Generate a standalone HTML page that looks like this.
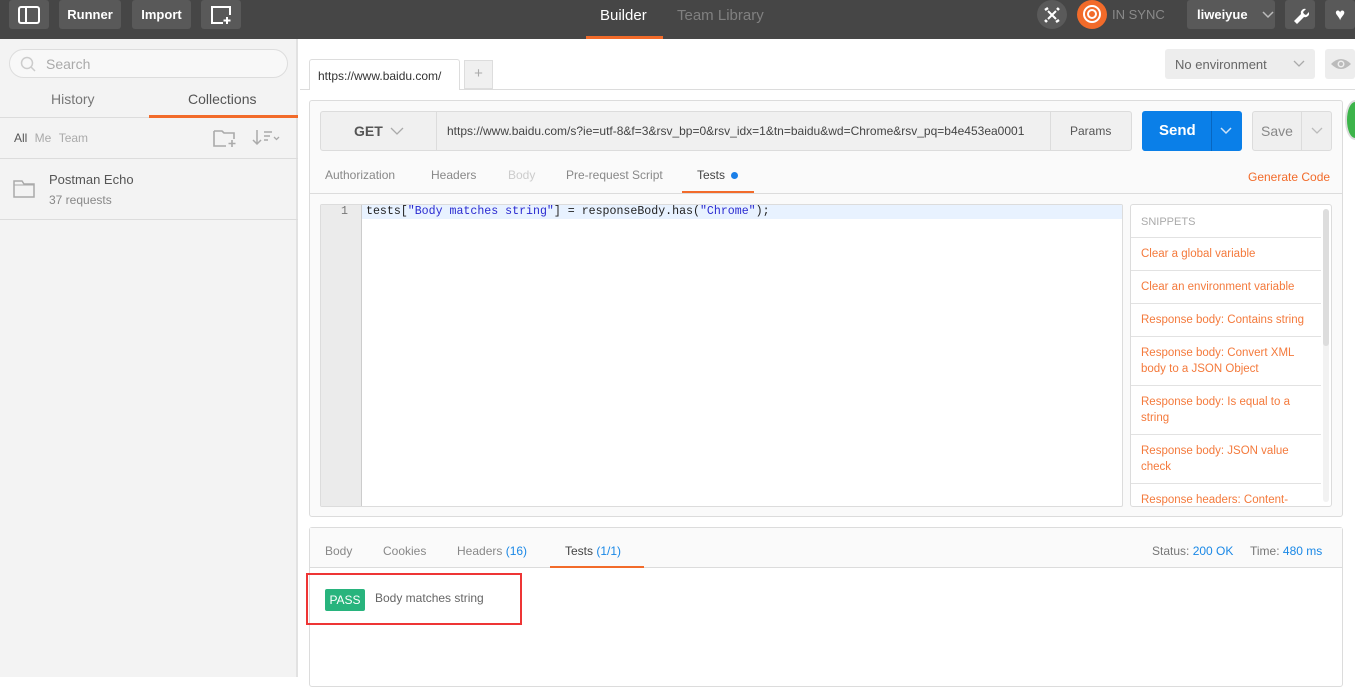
<!DOCTYPE html>
<html><head><meta charset="utf-8"><style>
*{box-sizing:border-box;margin:0;padding:0}
body{width:1355px;height:677px;overflow:hidden;background:#fff;font-family:"Liberation Sans",sans-serif;font-size:13px;color:#505050;position:relative}
.a{position:absolute}
.top{left:0;top:0;width:1355px;height:39px;background:#464646}
.tb{background:#595959;border-radius:3px;color:#fff;font-weight:bold;font-size:13px;display:flex;align-items:center;justify-content:center;top:0;height:29px}
.side{left:0;top:39px;width:298px;height:638px;background:#f3f3f3;border-right:2px solid #e2e2e2}
.hl{height:1px;background:#dcdcdc}
.blue{color:#1a88e6}
.box{border:1px solid #dcdcdc;border-radius:3px}
.snip{left:0;width:190px;padding:0 10px;color:#f47a3c;font-size:11.5px;line-height:16px;border-bottom:1px solid #e2e2e2;display:flex;align-items:center;white-space:nowrap}
.snip.w{white-space:normal}
</style></head><body>
<div class="a top"></div>
<div class="a tb" style="left:9px;width:40px"><svg width="22" height="18"><rect x="1" y="1" width="20" height="16" rx="2" fill="none" stroke="#fff" stroke-width="2"/><line x1="8" y1="1" x2="8" y2="17" stroke="#fff" stroke-width="2"/></svg></div>
<div class="a tb" style="left:59px;width:62px">Runner</div>
<div class="a tb" style="left:132px;width:59px">Import</div>
<div class="a tb" style="left:201px;width:40px"><svg width="24" height="20"><path d="M14 2H3v16h11" fill="none" stroke="#fff" stroke-width="2"/><path d="M3 2h18v8" fill="none" stroke="#fff" stroke-width="2"/><path d="M18 12v7M14.5 15.5h7" stroke="#fff" stroke-width="2"/></svg></div>
<div class="a" style="left:600px;top:7px;color:#fff;font-size:15px">Builder</div>
<div class="a" style="left:586px;top:36px;width:77px;height:3px;background:#f26b2a"></div>
<div class="a" style="left:677px;top:7px;color:#808080;font-size:15px">Team Library</div>
<div class="a" style="left:1037px;top:0;width:30px;height:29px;border-radius:50%;background:#5a5a5a"></div>
<svg class="a" style="left:1042px;top:5px" width="20" height="20"><path d="M6 6l8 8M14 6l-8 8" stroke="#fff" stroke-width="2"/><path d="M3 5l3-2M17 15l-3 2M15 3l2 2M3 15l2 2" stroke="#fff" stroke-width="2.5"/></svg>
<div class="a" style="left:1077px;top:0;width:30px;height:29px;border-radius:50%;background:#f26b2a"></div>
<div class="a" style="left:1083px;top:5px;width:18px;height:18px;border-radius:50%;border:2px solid #fff"></div>
<div class="a" style="left:1087px;top:9px;width:10px;height:10px;border-radius:50%;border:2px solid #fff"></div>
<div class="a" style="left:1112px;top:7px;color:#8a8a8a;font-size:13px">IN SYNC</div>
<div class="a tb" style="left:1187px;width:88px;justify-content:flex-start;padding-left:10px">liweiyue<svg style="margin-left:14px" width="12" height="8"><path d="M1 1l5 5 5-5" fill="none" stroke="#bbb" stroke-width="1.5"/></svg></div>
<div class="a tb" style="left:1285px;width:30px"><svg width="18" height="18"><path d="M3 15l7-7a4 4 0 0 1 5-5l-3 3 1 2 2 1 3-3a4 4 0 0 1-5 5l-7 7z" fill="#fff"/></svg></div>
<div class="a tb" style="left:1325px;width:30px;font-size:17px">&#9829;</div>

<div class="a side"></div>
<div class="a" style="left:9px;top:49px;width:279px;height:29px;border:1px solid #ddd;border-radius:15px;background:#f8f8f8"></div>
<svg class="a" style="left:20px;top:56px" width="16" height="16"><circle cx="7" cy="7" r="5.5" fill="none" stroke="#ccc" stroke-width="1.5"/><path d="M11 11l4 4" stroke="#ccc" stroke-width="1.5"/></svg>
<div class="a" style="left:46px;top:56px;color:#aaa;font-size:14px">Search</div>
<div class="a" style="left:51px;top:91px;font-size:14px;color:#777">History</div>
<div class="a" style="left:188px;top:91px;font-size:14px;color:#555">Collections</div>
<div class="a hl" style="left:0;top:117px;width:298px"></div>
<div class="a" style="left:149px;top:115px;width:149px;height:3px;background:#f26b2a"></div>
<div class="a" style="left:14px;top:131px;font-size:12px;color:#555">All <span style="color:#aaa;margin-left:4px">Me</span> <span style="color:#aaa;margin-left:4px">Team</span></div>
<svg class="a" style="left:212px;top:128px" width="28" height="20"><path d="M2 3h8l2 2h10v6M2 3v15h12" fill="none" stroke="#aaa" stroke-width="1.6"/><path d="M20 12v7M16.5 15.5h7" stroke="#aaa" stroke-width="1.6"/></svg>
<svg class="a" style="left:252px;top:128px" width="30" height="20"><path d="M5 2v14M1 12l4 4 4-4" fill="none" stroke="#aaa" stroke-width="1.5"/><path d="M12 4h8M12 8h6M12 12h4" stroke="#aaa" stroke-width="1.5"/><path d="M22 9l2.5 2.5L27 9" fill="none" stroke="#aaa" stroke-width="1.3"/></svg>
<div class="a hl" style="left:0;top:158px;width:298px"></div>
<svg class="a" style="left:13px;top:180px" width="22" height="18"><path d="M1 1h8l2 3h10v13H1z" fill="none" stroke="#aaa" stroke-width="1.5"/><path d="M1 5h20" stroke="#aaa" stroke-width="1"/></svg>
<div class="a" style="left:49px;top:172px;font-size:13px;color:#555">Postman Echo</div>
<div class="a" style="left:49px;top:193px;font-size:12px;color:#888">37 requests</div>
<div class="a hl" style="left:0;top:219px;width:298px"></div>

<div class="a" style="left:309px;top:59px;width:151px;height:31px;border:1px solid #ddd;border-bottom:none;border-radius:3px 3px 0 0;background:#fff;padding:9px 0 0 8px;font-size:12px;color:#333;white-space:nowrap;overflow:hidden">https://www.baidu.com/</div>
<div class="a" style="left:464px;top:60px;width:29px;height:29px;border:1px solid #ddd;background:#f0f0f0;color:#aaa;text-align:center;line-height:26px;font-size:15px">+</div>
<div class="a hl" style="left:300px;top:89px;width:1055px"></div>
<div class="a" style="left:310px;top:89px;width:149px;height:1px;background:#fff"></div>
<div class="a" style="left:1165px;top:49px;width:150px;height:30px;background:#ededed;border-radius:3px;color:#666;padding:8px 10px;font-size:13px">No environment<svg style="position:absolute;right:10px;top:11px" width="12" height="8"><path d="M1 1l5 5 5-5" fill="none" stroke="#aaa" stroke-width="1.3"/></svg></div>
<div class="a" style="left:1325px;top:49px;width:30px;height:30px;background:#ededed;border-radius:3px"></div>
<svg class="a" style="left:1329px;top:57px" width="24" height="14"><path d="M2 7q10-10 20 0q-10 10-20 0z" fill="#bbb"/><circle cx="12" cy="7" r="3.5" fill="#ededed"/><circle cx="12" cy="7" r="2" fill="#bbb"/></svg>

<div class="a box" style="left:309px;top:100px;width:1034px;height:417px;background:#fafafa"></div>
<div class="a box" style="left:320px;top:111px;width:812px;height:40px;background:#f0f0f0"></div>
<div class="a" style="left:354px;top:123px;font-weight:bold;font-size:14px;color:#555">GET</div>
<svg class="a" style="left:390px;top:127px" width="14" height="9"><path d="M1 1l6 6 6-6" fill="none" stroke="#aaa" stroke-width="1.3"/></svg>
<div class="a" style="left:436px;top:111px;width:1px;height:40px;background:#dcdcdc"></div>
<div class="a" style="left:447px;top:124px;font-size:12px;color:#444;width:602px;overflow:hidden;white-space:nowrap">https://www.baidu.com/s?ie=utf-8&amp;f=3&amp;rsv_bp=0&amp;rsv_idx=1&amp;tn=baidu&amp;wd=Chrome&amp;rsv_pq=b4e453ea0001</div>
<div class="a" style="left:1050px;top:111px;width:1px;height:40px;background:#dcdcdc"></div>
<div class="a" style="left:1070px;top:124px;font-size:12px;color:#555">Params</div>
<div class="a" style="left:1142px;top:111px;width:100px;height:40px;background:#0a7fe8;border-radius:3px"></div>
<div class="a" style="left:1159px;top:122px;color:#fff;font-weight:bold;font-size:15px">Send</div>
<div class="a" style="left:1211px;top:111px;width:1px;height:40px;background:#0766c0"></div>
<svg class="a" style="left:1220px;top:127px" width="12" height="8"><path d="M1 1l5 5 5-5" fill="none" stroke="#cfe3f7" stroke-width="1.5"/></svg>
<div class="a box" style="left:1252px;top:111px;width:80px;height:40px;background:#efefef"></div>
<div class="a" style="left:1261px;top:123px;font-size:14px;color:#888">Save</div>
<div class="a" style="left:1301px;top:111px;width:1px;height:40px;background:#dcdcdc"></div>
<svg class="a" style="left:1311px;top:127px" width="12" height="8"><path d="M1 1l5 5 5-5" fill="none" stroke="#bbb" stroke-width="1.3"/></svg>

<div class="a" style="left:325px;top:168px;font-size:12px;color:#888">Authorization</div>
<div class="a" style="left:431px;top:168px;font-size:12px;color:#888">Headers</div>
<div class="a" style="left:508px;top:168px;font-size:12px;color:#ccc">Body</div>
<div class="a" style="left:566px;top:168px;font-size:12px;color:#888">Pre-request Script</div>
<div class="a" style="left:697px;top:168px;font-size:12px;color:#444">Tests</div>
<div class="a" style="left:731px;top:172px;width:7px;height:7px;border-radius:50%;background:#1a7fe8"></div>
<div class="a" style="left:1248px;top:170px;font-size:12px;color:#f26b2a">Generate Code</div>
<div class="a hl" style="left:310px;top:193px;width:1032px"></div>
<div class="a" style="left:682px;top:191px;width:72px;height:2px;background:#f26b2a"></div>

<div class="a box" style="left:320px;top:204px;width:803px;height:303px;background:#fff;border-radius:2px"></div>
<div class="a" style="left:321px;top:205px;width:41px;height:301px;background:#ebebeb;border-right:1px solid #ccc"></div>
<div class="a" style="left:362px;top:205px;width:760px;height:14px;background:#e8f2ff"></div>
<div class="a" style="left:341px;top:205px;font-family:'Liberation Mono',monospace;font-size:11.6px;color:#777">1</div>
<div class="a" style="left:366px;top:205px;font-family:'Liberation Mono',monospace;font-size:11.6px;color:#222;white-space:pre">tests[<span style="color:#2a2ad0">"Body matches string"</span>] = responseBody.has(<span style="color:#2a2ad0">"Chrome"</span>);</div>

<div class="a box" style="left:1130px;top:204px;width:202px;height:303px;background:#fff;overflow:hidden">
 <div class="a" style="left:10px;top:11px;font-size:11px;color:#aaa">SNIPPETS</div>
 <div class="a" style="left:0;top:32px;width:190px;height:1px;background:#e2e2e2"></div>
 <div class="a snip" style="top:33px;height:33px">Clear a global variable</div>
 <div class="a snip" style="top:66px;height:33px">Clear an environment variable</div>
 <div class="a snip" style="top:99px;height:33px">Response body: Contains string</div>
 <div class="a snip w" style="top:132px;height:49px">Response body: Convert XML body to a JSON Object</div>
 <div class="a snip w" style="top:181px;height:49px">Response body: Is equal to a string</div>
 <div class="a snip w" style="top:230px;height:49px">Response body: JSON value check</div>
 <div class="a snip" style="top:279px;height:40px;align-items:flex-start;padding-top:8px">Response headers: Content-</div>
 <div class="a" style="left:192px;top:4px;width:6px;height:293px;background:#f2f2f2;border-radius:3px"></div>
 <div class="a" style="left:192px;top:4px;width:6px;height:137px;background:#ddd;border-radius:3px"></div>
</div>

<div class="a box" style="left:309px;top:527px;width:1034px;height:160px;background:#fff"></div>
<div class="a" style="left:310px;top:528px;width:1032px;height:40px;background:#fafafa;border-bottom:1px solid #dcdcdc"></div>
<div class="a" style="left:325px;top:544px;font-size:12px;color:#888">Body</div>
<div class="a" style="left:383px;top:544px;font-size:12px;color:#888">Cookies</div>
<div class="a" style="left:457px;top:544px;font-size:12px;color:#888">Headers <span class="blue">(16)</span></div>
<div class="a" style="left:565px;top:544px;font-size:12px;color:#444">Tests <span class="blue">(1/1)</span></div>
<div class="a" style="left:550px;top:566px;width:94px;height:2px;background:#f26b2a"></div>
<div class="a" style="left:1152px;top:544px;font-size:12px;color:#777">Status: <span class="blue">200 OK</span></div>
<div class="a" style="left:1250px;top:544px;font-size:12px;color:#777">Time: <span class="blue">480 ms</span></div>
<div class="a" style="left:306px;top:573px;width:216px;height:52px;border:2px solid #ee3535"></div>
<div class="a" style="left:325px;top:589px;width:40px;height:22px;background:#28b47d;border-radius:2px;color:#fff;font-size:12px;text-align:center;line-height:22px">PASS</div>
<div class="a" style="left:375px;top:591px;font-size:12px;color:#666">Body matches string</div>
<div class="a" style="left:1345px;top:100px;width:20px;height:40px;border-radius:50%;background:#3cb44a;border:2px solid #ddd"></div>
</body></html>
